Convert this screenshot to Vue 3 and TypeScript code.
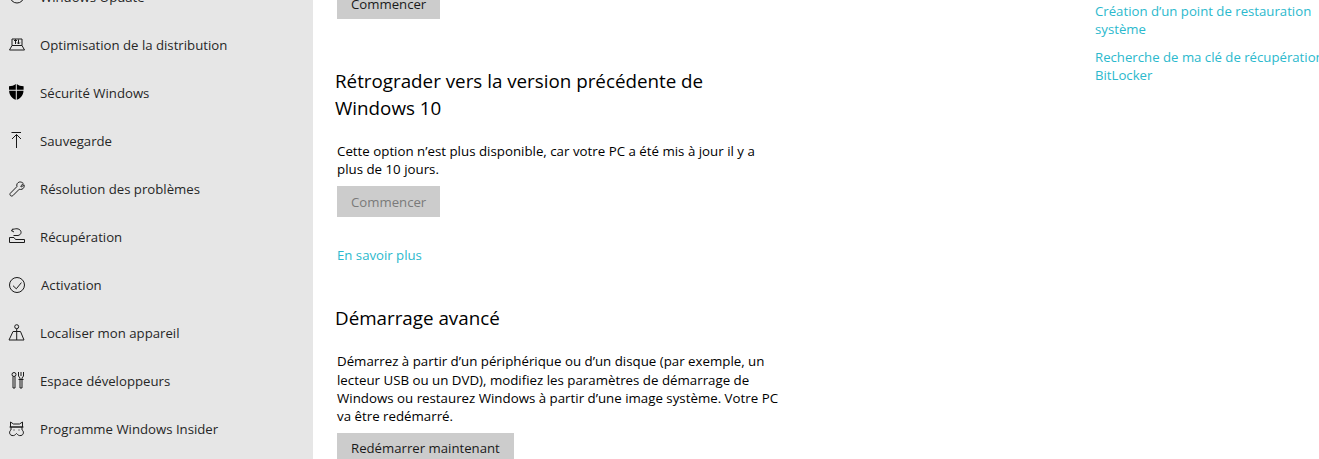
<template>
  <div class="page">
    <nav class="sidebar">
      <div v-for="item in navItems" :key="item.label" class="nav-item">
        <svg class="nav-icon" viewBox="0 0 16 16" width="16" height="16">
          <path v-if="item.stroke" :d="item.stroke" fill="none" stroke="#1a1a1a" stroke-width="1" />
          <path v-if="item.fill" :d="item.fill" fill="#000" />
        </svg>
        <span class="nav-label" :class="{ nudge: item.nudge }">{{ item.label }}</span>
      </div>
    </nav>

    <main class="content">
      <button class="btn">Commencer</button>

      <h2 class="title first-title">Rétrograder vers la version précédente de<br />Windows 10</h2>
      <p class="text">
        Cette option n’est plus disponible, car votre PC a été mis à jour il y a<br />plus de 10 jours.
      </p>
      <button class="btn disabled">Commencer</button>
      <a class="link more">En savoir plus</a>

      <h2 class="title second-title">Démarrage avancé</h2>
      <p class="text tight">
        Démarrez à partir d’un périphérique ou d’un disque (par exemple, un<br />
        lecteur USB ou un DVD), modifiez les paramètres de démarrage de<br />
        Windows ou restaurez Windows à partir d’une image système. Votre PC<br />
        va être redémarré.
      </p>
      <button class="btn">Redémarrer maintenant</button>
    </main>

    <aside class="related">
      <a class="link">Création d’un point de restauration<br />système</a>
      <a class="link">Recherche de ma clé de récupération<br />BitLocker</a>
    </aside>
  </div>
</template>

<script setup lang="ts">
interface NavItem {
  label: string;
  stroke?: string;
  fill?: string;
  nudge?: boolean;
}

const navItems: NavItem[] = [
  { label: 'Windows Update', stroke: 'M2 7A7 7 0 0 0 16 7' },
  {
    label: 'Optimisation de la distribution',
    stroke: 'M4 8.5V2H14V8.5M4 8.5H14L16.5 13H1.5ZM7.5 7V2.5M6 4L7.5 2.5L9 4M10.5 2.5V7M9.2 5.5L10.5 7L11.8 5.5',
  },
  {
    label: 'Sécurité Windows',
    fill: 'M7.8 -1C6 .6 3.5 1.2 1 1.2V4.8H7.8ZM8.8 -1C10.6 .6 13.1 1.2 15.6 1.2V4.8H8.8ZM1.1 5.8H7.8V14.8C4 13.4 1.4 10.5 1.1 5.8ZM8.8 5.8H15.5C15.2 10.5 12.6 13.4 8.8 14.8Z',
  },
  { label: 'Sauvegarde', stroke: 'M3.5 -.5H13M8.5 15V1.5M4 6L8.5 1.5L13 6' },
  {
    label: 'Résolution des problèmes',
    stroke: 'M11.5 1C13 .8 14.5 1.5 15.3 2.5L12.7 5L13.5 6L16 3.7C16.6 5.5 15.8 7.5 14 8.2C13 8.6 12 8.5 11.3 8.2L4.8 14.7C4 15.4 2.8 15 2.3 14.4C1.8 13.8 1.8 12.8 2.4 12.2L8.9 5.6C8.3 3.3 9.5 1.4 11.5 1Z',
  },
  {
    label: 'Récupération',
    stroke: 'M1.5 8.5H6L7.5 10.5H16.5V13.5H1.5ZM5 -.5L3.5 1.7L6 3M3.7 1.7C5.5 -.5 10 -1 12 1C14 3 13 6 10 6.5H5.5',
  },
  {
    label: 'Activation',
    stroke: 'M16.5 8A7.5 7.5 0 1 1 1.5 8A7.5 7.5 0 1 1 16.5 8ZM5 8.7L8.3 11.8L13.4 5.6',
    nudge: true,
  },
  {
    label: 'Localiser mon appareil',
    stroke: 'M8.7 3.7A2 2 0 1 0 8.7 -.3A2 2 0 1 0 8.7 3.7ZM8.7 3.7V15M5 6.5H12.5M5 6.5L1 15H16L12.5 6.5',
  },
  {
    label: 'Espace développeurs',
    stroke: 'M6 -.5A2 2 0 1 0 6 3.5A2 2 0 1 0 6 -.5ZM5 3.5V15H7V3.5M10.5 -1V3L12 5V15H14V5L15.5 3V-1M13 -1V3M10.5 6.5H15.5',
  },
  {
    label: 'Programme Windows Insider',
    stroke: 'M2.5 1L5.5 3H11.5L14.5 1V6H2.5ZM1.5 6H15.5M3 6V9C1 10 1 14 4 14.5C6 15 7 14 8.5 12.5C10 14 11 15 13 14.5C16 14 16 10 14 9V6M6 8.5V9.5M11 8.5V9.5',
  },
];
</script>

<style scoped>
.page {
  display: flex;
  width: 1319px;
  height: 459px;
  overflow: hidden;
  background: #fff;
  color: #000;
  font-family: "Open Sans", "Noto Sans", sans-serif;
}

.sidebar {
  flex: 0 0 313px;
  height: 486px;
  margin-top: -27px;
  background: #e6e6e6;
}

.nav-item {
  display: flex;
  align-items: center;
  height: 48px;
  padding-left: 8px;
  color: #262626;
}

.nav-icon {
  flex: none;
  margin-right: 16px;
  overflow: visible;
}

.nav-label {
  font-size: 13.2px;
}

.nav-label.nudge {
  margin-left: 1px;
}

.content {
  flex: 0 0 782px;
  padding-left: 24px;
  box-sizing: border-box;
  margin-top: -12px;
}

.btn {
  display: block;
  height: 31px;
  padding: 0 14px;
  border: 0;
  background: #ccc;
  color: #1a1a1a;
  font: inherit;
  font-size: 13.2px;
}

.btn.disabled {
  color: #7a7a7a;
}

.title {
  margin: 0 0 0 -2px;
  font-size: 18.8px;
  font-weight: 400;
  line-height: 27px;
  white-space: nowrap;
}

.first-title {
  margin-top: 49px;
  margin-bottom: 20px;
}

.second-title {
  margin-top: 41px;
  margin-bottom: 20px;
}

.text {
  margin: 0 0 7.4px;
  font-size: 13.3px;
  line-height: 18.4px;
  white-space: nowrap;
}

.text.tight {
  margin-bottom: 6.8px;
}

.link {
  display: block;
  color: #2bb9cd;
  font-size: 13.2px;
  line-height: 18px;
  white-space: nowrap;
}

.more {
  margin-top: 29px;
}

.related {
  display: flex;
  flex-direction: column;
  gap: 10px;
  padding-top: 2px;
}
</style>

<style>
html,
body {
  overflow: hidden;
}
</style>
